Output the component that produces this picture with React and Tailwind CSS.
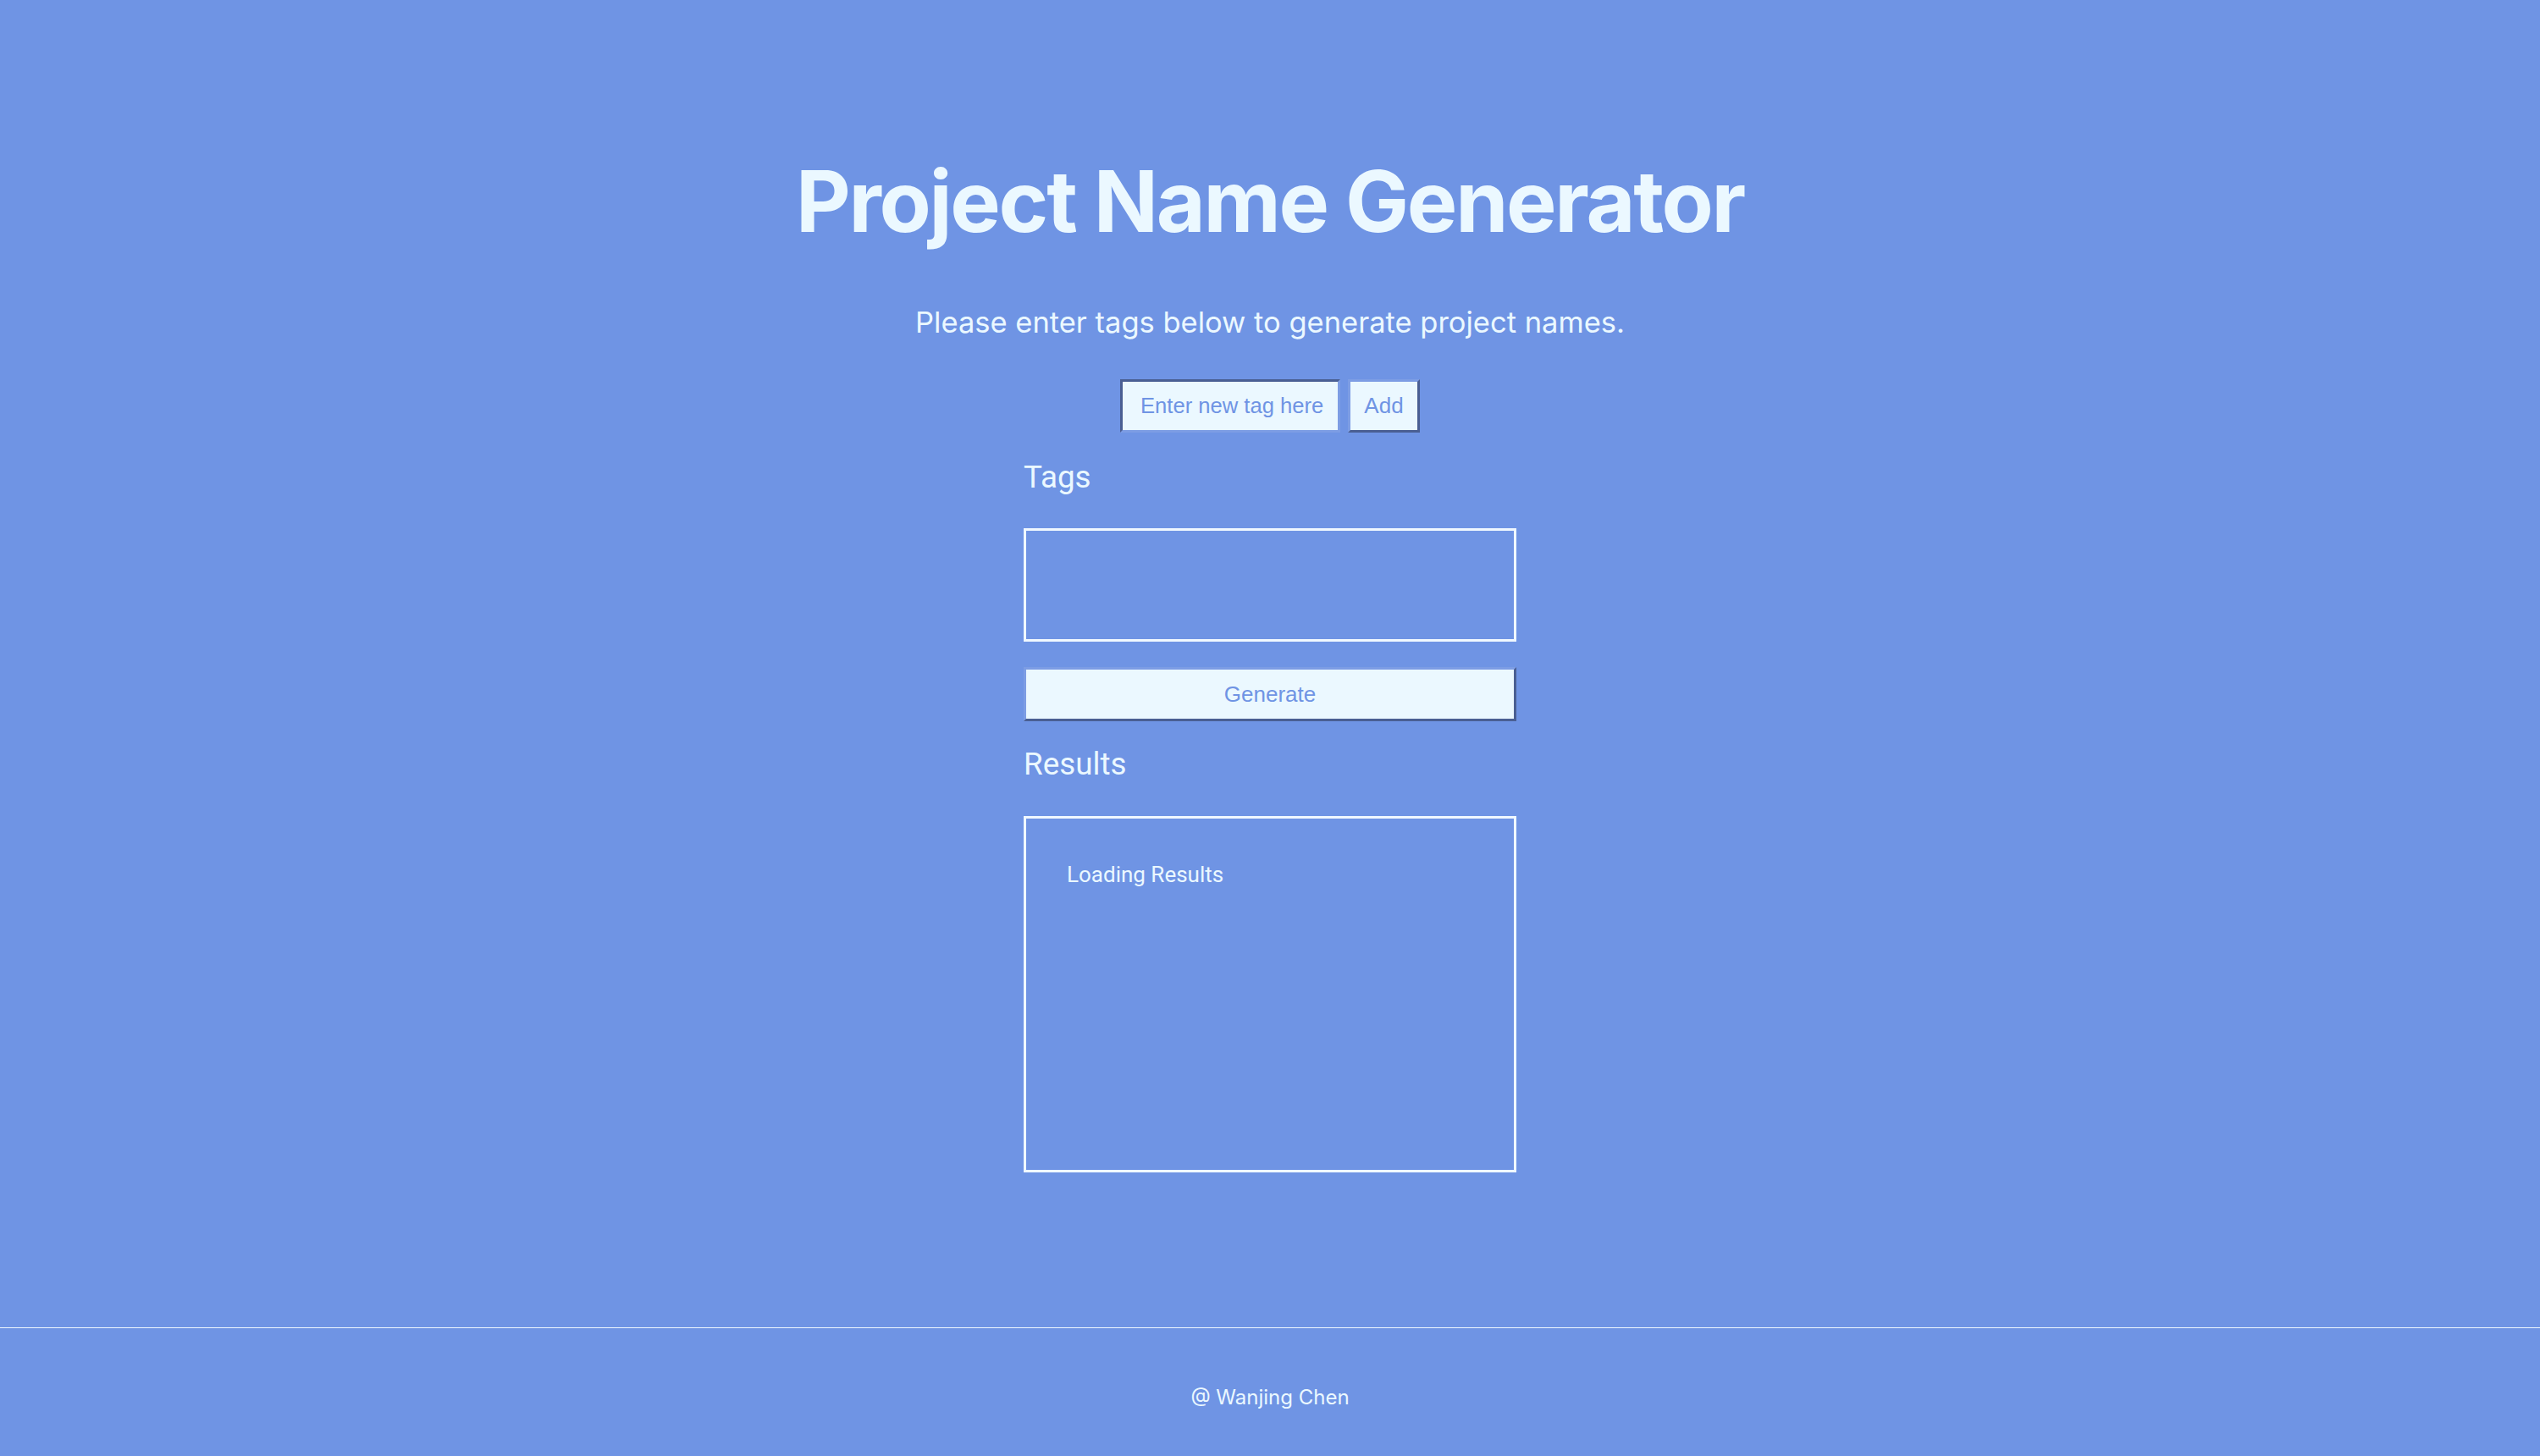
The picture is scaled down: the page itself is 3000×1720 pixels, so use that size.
import React from "react";

export default function App() {
  return (
    <div className="min-h-[1720px] w-full bg-[#6f94e4] text-[#ebf8ff] flex flex-col" style={{ fontFamily: "Inter, 'Noto Sans', sans-serif" }}>
      <main className="flex-1 flex flex-col items-center">
        <h1 className="mt-[188px] text-[100px] leading-[100px] font-bold tracking-[-2.3px]">Project Name Generator</h1>
        <p className="mt-[73px] text-[34.5px] leading-[40px]">Please enter tags below to generate project names.</p>
        <div className="mt-[47px] flex gap-[9px] h-[63px]">
          <input
            type="text"
            placeholder="Enter new tag here"
            className="w-[260px] h-[63px] bg-[#ebf8ff] border-[3px] border-t-[#4a5f93] border-l-[#4a5f93] border-b-[#7d9de4] border-r-[#7d9de4] pl-[21px] pr-[4px] text-[25.6px] text-[#6f94e4] placeholder:text-[#6f94e4] outline-none"
            style={{ fontFamily: "'Liberation Sans', Arial, sans-serif" }}
          />
          <button
            className="w-[85px] h-[63px] bg-[#ebf8ff] border-[3px] border-t-[#7d9de4] border-l-[#7d9de4] border-b-[#4a5f93] border-r-[#4a5f93] text-[26px] text-[#6f94e4]"
            style={{ fontFamily: "'Liberation Sans', Arial, sans-serif" }}
          >
            Add
          </button>
        </div>
        <div className="w-[582px] flex flex-col">
          <h3 className="mt-[31px] text-[36.8px] leading-[44px]" style={{ fontFamily: "Roboto, 'Noto Sans', sans-serif" }}>Tags</h3>
          <div className="mt-[38px] h-[134px] border-[3px] border-[#f0f8ff]"></div>
          <button
            className="mt-[30px] h-[64px] w-full bg-[#ebf8ff] border-[3px] border-t-[#7d9de4] border-l-[#7d9de4] border-b-[#4a5f93] border-r-[#4a5f93] text-[26px] text-[#6f94e4]"
            style={{ fontFamily: "'Liberation Sans', Arial, sans-serif" }}
          >
            Generate
          </button>
          <h3 className="mt-[29px] text-[36.8px] leading-[44px]" style={{ fontFamily: "Roboto, 'Noto Sans', sans-serif" }}>Results</h3>
          <div className="mt-[39px] h-[421px] border-[3px] border-[#f0f8ff] pl-[48px] pt-[50px]">
            <p className="text-[26px] leading-[32px] font-normal" style={{ fontFamily: "Roboto, 'Noto Sans', sans-serif" }}>Loading Results</p>
          </div>
        </div>
      </main>
      <footer className="border-t border-[#f0f8ff] h-[152px] flex justify-center pt-[66px]">
        <span className="text-[24px] leading-[32px]">@ Wanjing Chen</span>
      </footer>
    </div>
  );
}
